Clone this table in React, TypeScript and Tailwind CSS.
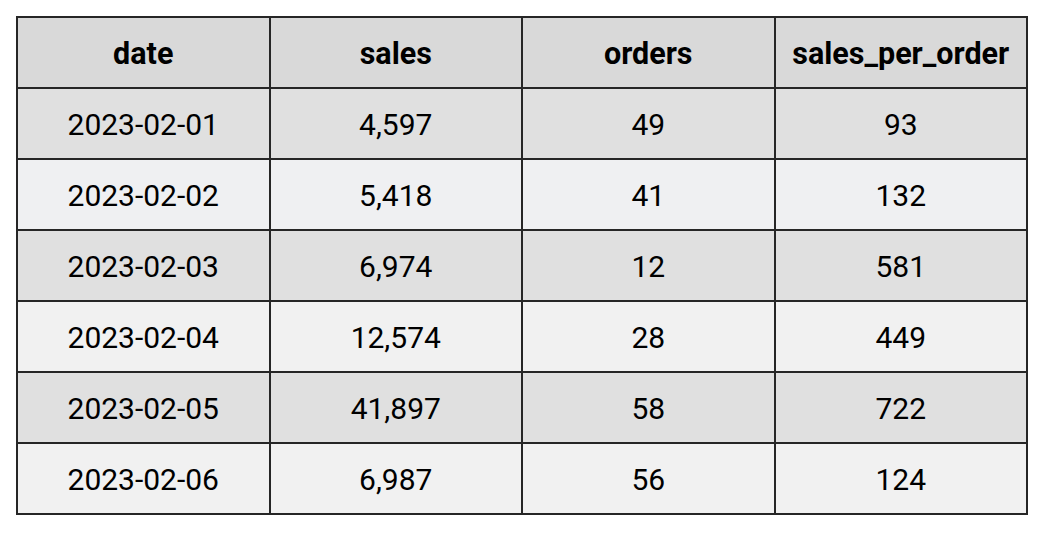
const columns = ["date", "sales", "orders", "sales_per_order"];

const rows = [
  ["2023-02-01", "4,597", "49", "93"],
  ["2023-02-02", "5,418", "41", "132"],
  ["2023-02-03", "6,974", "12", "581"],
  ["2023-02-04", "12,574", "28", "449"],
  ["2023-02-05", "41,897", "58", "722"],
  ["2023-02-06", "6,987", "56", "124"],
];

// alternating row shades, second one is a touch bluer than the rest
const rowBg = [
  "bg-[#e0e0e0]",
  "bg-[#eff0f2]",
  "bg-[#e0e0e0]",
  "bg-[#f1f1f1]",
  "bg-[#e0e0e0]",
  "bg-[#f1f1f1]",
];

export default function App() {
  return (
    <div className="min-h-screen bg-white pl-[16px] pt-[16px] font-['Roboto','Liberation_Sans',sans-serif] text-black">
      <table className="w-[1012px] table-fixed border-collapse border-[2px] border-black">
        <thead>
          <tr className="bg-[#d9d9d9]">
            {columns.map((c) => (
              <th
                key={c}
                className="h-[71px] border-[2px] border-[#262626] p-0 pt-[2px] text-center text-[30.5px] font-bold"
              >
                {c}
              </th>
            ))}
          </tr>
        </thead>
        <tbody>
          {rows.map((r, i) => (
            <tr key={r[0]} className={rowBg[i]}>
              {r.map((v, j) => (
                <td
                  key={j}
                  className="h-[71px] border-[2px] border-[#262626] p-0 pt-[2px] text-center text-[30px] font-normal"
                >
                  {v}
                </td>
              ))}
            </tr>
          ))}
        </tbody>
      </table>
    </div>
  );
}
